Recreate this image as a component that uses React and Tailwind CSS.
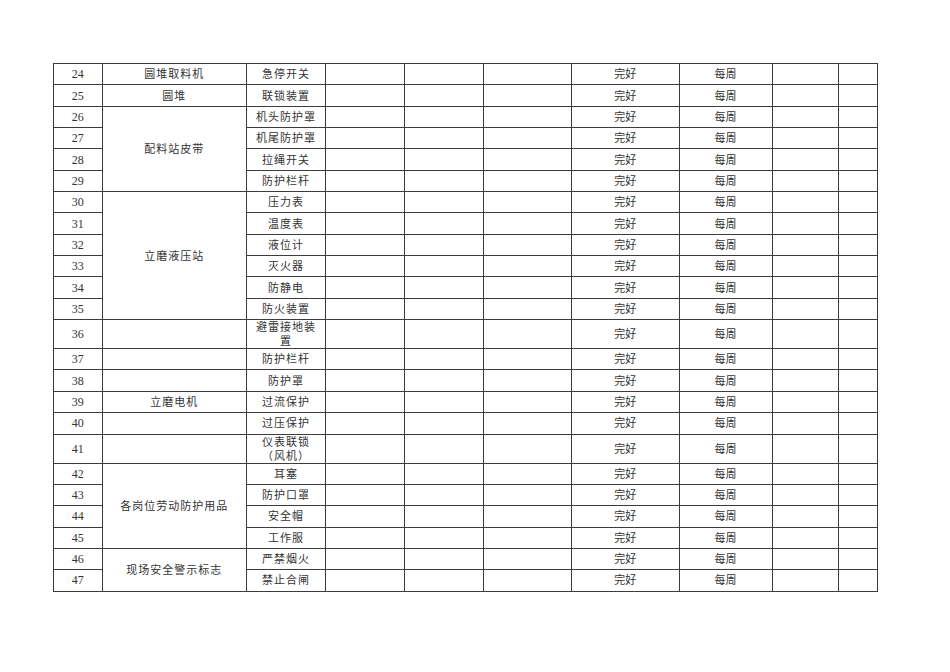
const rows = [
    { no: 24, group: '圆堆取料机', span: 1, item: '急停开关' },
    { no: 25, group: '圆堆', span: 1, item: '联锁装置' },
    { no: 26, group: '配料站皮带', span: 4, item: '机头防护罩' },
    { no: 27, item: '机尾防护罩' },
    { no: 28, item: '拉绳开关' },
    { no: 29, item: '防护栏杆' },
    { no: 30, group: '立磨液压站', span: 6, item: '压力表' },
    { no: 31, item: '温度表' },
    { no: 32, item: '液位计' },
    { no: 33, item: '灭火器' },
    { no: 34, item: '防静电' },
    { no: 35, item: '防火装置' },
    { no: 36, group: '', span: 1, item: ['避雷接地装', '置'], h: 'h-[29px]' },
    { no: 37, group: '', span: 1, item: '防护栏杆' },
    { no: 38, group: '', span: 1, item: '防护罩' },
    { no: 39, group: '立磨电机', span: 1, item: '过流保护' },
    { no: 40, group: '', span: 1, item: '过压保护' },
    { no: 41, group: '', span: 1, item: ['仪表联锁', '（风机）'], h: 'h-[27.5px]' },
    { no: 42, group: '各岗位劳动防护用品', span: 4, item: '耳塞' },
    { no: 43, item: '防护口罩' },
    { no: 44, item: '安全帽' },
    { no: 45, item: '工作服' },
    { no: 46, group: '现场安全警示标志', span: 2, item: '严禁烟火' },
    { no: 47, item: '禁止合闸' },
];

const cell = 'border border-[#3c3c3c] p-0 text-center align-middle';

export default function App() {
    return (
        <div className="min-h-[672px] w-[950px] bg-white pl-[53px] pt-[63px] text-[#333]" style={{ fontFamily: '"Liberation Serif", "Noto Sans CJK SC", serif' }}>
            <table className="table-fixed border-collapse text-[11px] leading-[14px]">
                <colgroup>
                    <col className="w-[48.5px]" />
                    <col className="w-[144.5px]" />
                    <col className="w-[79px]" />
                    <col className="w-[78.5px]" />
                    <col className="w-[79.5px]" />
                    <col className="w-[88px]" />
                    <col className="w-[107.5px]" />
                    <col className="w-[93px]" />
                    <col className="w-[66px]" />
                    <col className="w-[39.5px]" />
                </colgroup>
                <tbody>
                    {rows.map((row) => (
                        <tr key={row.no} className={row.h || 'h-[21.35px]'}>
                            <td className={`${cell} text-[12px]`}>{row.no}</td>
                            {row.span && (
                                <td rowSpan={row.span} className={`${cell} tracking-[1px]`}>{row.group}</td>
                            )}
                            <td className={`${cell} tracking-[1px]`}>
                                {Array.isArray(row.item) ? (
                                    <>
                                        {row.item[0]}
                                        <br />
                                        {row.item[1]}
                                    </>
                                ) : (
                                    row.item
                                )}
                            </td>
                            <td className={cell}></td>
                            <td className={cell}></td>
                            <td className={cell}></td>
                            <td className={cell}>完好</td>
                            <td className={cell}>每周</td>
                            <td className={cell}></td>
                            <td className={cell}></td>
                        </tr>
                    ))}
                </tbody>
            </table>
        </div>
    );
}
